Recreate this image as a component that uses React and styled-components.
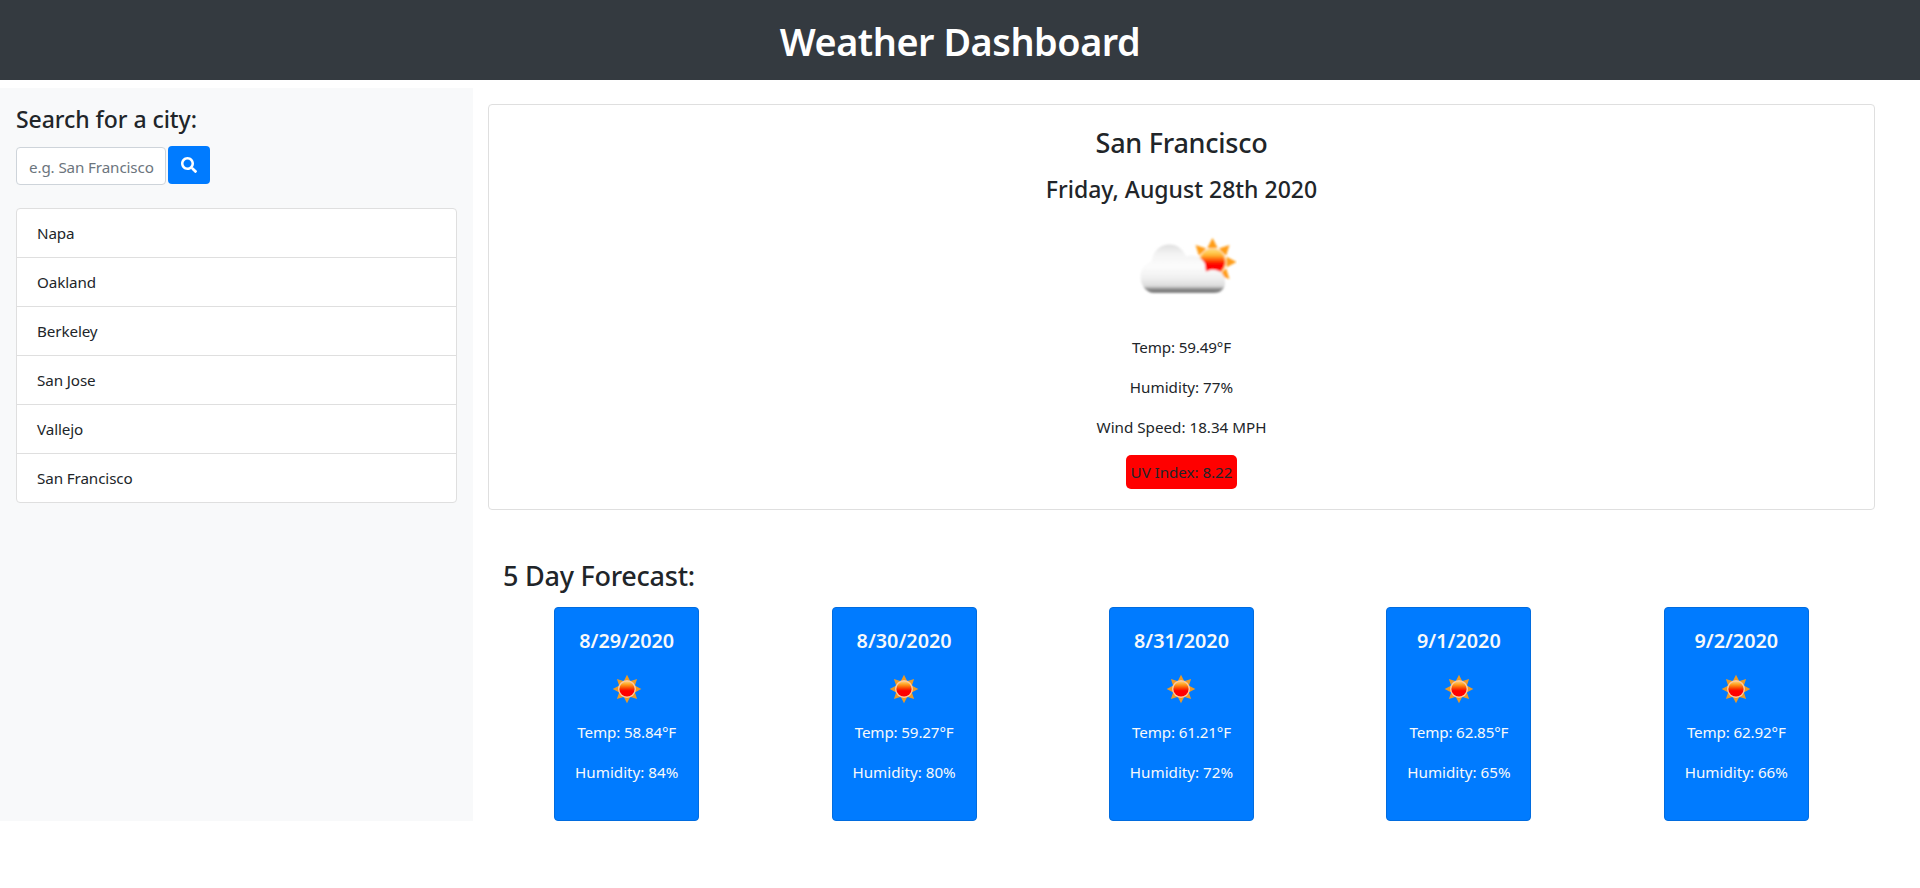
import React from 'react';
import styled, { createGlobalStyle } from 'styled-components';
import { FaSearch } from 'react-icons/fa';

const GlobalStyle = createGlobalStyle`
  *, *::before, *::after { box-sizing: border-box; }
  body {
    margin: 0;
    background: #fff;
    color: #212529;
    font: 400 15.2px/24px "Noto Sans", "Open Sans", sans-serif;
  }
  h1, h2, h3, h4, p, ul { margin: 0; padding: 0; }
`;

const Header = styled.header`
  height: 80px;
  padding-top: 18px;
  background: #343a40;
  color: #fff;
  text-align: center;
`;

const Title = styled.h1`
  font-size: 37.8px;
  font-weight: 600;
  line-height: 48px;
  letter-spacing: -0.45px;
`;

const Layout = styled.div`
  display: flex;
  height: 733px;
  margin-top: 8px;
`;

const Sidebar = styled.aside`
  width: 473px;
  padding: 17px 16px 0;
  background: #f8f9fa;
`;

const SearchTitle = styled.h3`
  font-size: 23px;
  font-weight: 500;
  line-height: 29px;
  letter-spacing: -0.05px;
`;

const SearchForm = styled.form`
  display: flex;
  gap: 2px;
  margin: 12px 0 23px;
`;

const SearchInput = styled.input`
  width: 150px;
  height: 38px;
  margin-top: 1px;
  padding: 6px 10px 4px 12px;
  border: 1px solid #ced4da;
  border-radius: 4px;
  background: #fff;
  color: #495057;
  font: inherit;
  letter-spacing: -0.12px;
  outline: none;
  &::placeholder { color: #6c757d; opacity: 1; }
`;

const SearchButton = styled.button`
  display: flex;
  align-items: center;
  justify-content: center;
  width: 42px;
  height: 38px;
  padding: 0;
  border: 0;
  border-radius: 4px;
  background: #007bff;
  color: #fff;
  font-size: 16px;
`;

const CityList = styled.ul`
  list-style: none;
  border: 1px solid #dfdfdf;
  border-radius: 4px;
  background: #fff;
`;

const City = styled.li`
  height: 49px;
  padding: 12px 20px;
  border-bottom: 1px solid #dfdfdf;
  letter-spacing: -0.1px;
  &:last-child { height: 48px; border-bottom: 0; }
`;

const Main = styled.main`
  display: flex;
  flex-direction: column;
  width: 1387px;
  margin-left: 15px;
  padding-top: 16px;
`;

const CurrentCard = styled.section`
  display: flex;
  flex-direction: column;
  align-items: center;
  height: 406px;
  padding-top: 21px;
  border: 1px solid #dfdfdf;
  border-radius: 4px;
`;

const CityName = styled.h2`
  font-size: 27px;
  font-weight: 500;
  line-height: 34px;
  letter-spacing: -0.25px;
`;

const CurrentDate = styled.h3`
  margin-top: 15px;
  font-size: 23px;
  font-weight: 500;
  line-height: 29px;
`;

const CurrentIcon = styled.svg`
  width: 110px;
  height: 90px;
  margin: 15px 0 26px;
`;

const Reading = styled.p`
  margin-bottom: 16px;
  letter-spacing: ${({ $tight }) => ($tight ? '-0.15px' : '0')};
  white-space: nowrap;
`;

const UvBadge = styled.p`
  height: 34px;
  padding: 5px;
  border-radius: 5px;
  background: #f00;
  letter-spacing: -0.05px;
`;

const ForecastTitle = styled.h2`
  margin: 49px 0 14px 15px;
  font-size: 27px;
  font-weight: 500;
  line-height: 34px;
  letter-spacing: -0.25px;
`;

const ForecastRow = styled.div`
  display: grid;
  grid-template-columns: repeat(5, 1fr);
  justify-items: center;
`;

const DayCard = styled.article`
  display: flex;
  flex-direction: column;
  align-items: center;
  width: 145px;
  height: 214px;
  padding-top: 21px;
  border: 1px solid #016cdf;
  border-radius: 4px;
  background: #007bff;
  color: #f8f9fa;
`;

const DayDate = styled.h4`
  font-size: 19.8px;
  font-weight: 600;
  line-height: 24px;
`;

const DayIcon = styled.svg`
  width: 50px;
  height: 50px;
  margin: 11px 0 6px;
`;

const cities = ['Napa', 'Oakland', 'Berkeley', 'San Jose', 'Vallejo', 'San Francisco'];

const forecast = [
  { date: '8/29/2020', temp: '58.84', humidity: 84 },
  { date: '8/30/2020', temp: '59.27', humidity: 80 },
  { date: '8/31/2020', temp: '61.21', humidity: 72 },
  { date: '9/1/2020', temp: '62.85', humidity: 65 },
  { date: '9/2/2020', temp: '62.92', humidity: 66 },
];

const RAY_ANGLES = [0, 45, 90, 135, 180, 225, 270, 315];

function Rays({ tip, base, half, fill }) {
  return RAY_ANGLES.map((angle) => (
    <path key={angle} d={`M0 ${-tip}L${half} ${-base}H${-half}Z`} fill={fill} transform={`rotate(${angle})`} />
  ));
}

function PartlyCloudy() {
  return (
    <CurrentIcon viewBox="0 0 110 90" aria-label="Partly cloudy">
      <defs>
        <linearGradient id="cloudFill" x1="0" y1="25" x2="0" y2="74" gradientUnits="userSpaceOnUse">
          <stop offset="0" stopColor="#dedede" />
          <stop offset="0.2" stopColor="#f3f3f3" />
          <stop offset="0.45" stopColor="#fcfcfc" />
          <stop offset="0.68" stopColor="#f1f1f1" />
          <stop offset="0.86" stopColor="#dcdcdc" />
          <stop offset="0.91" stopColor="#999" />
          <stop offset="0.97" stopColor="#747474" />
          <stop offset="1" stopColor="#999" />
        </linearGradient>
        <linearGradient id="warmDisc" x1="0" y1="-12" x2="0" y2="12" gradientUnits="userSpaceOnUse">
          <stop offset="0" stopColor="#ffdc73" />
          <stop offset="0.22" stopColor="#ffb52f" />
          <stop offset="0.48" stopColor="#ff3b00" />
          <stop offset="0.58" stopColor="#f00" />
        </linearGradient>
        <filter id="cloudEdge" x="-5%" y="-5%" width="110%" height="110%">
          <feGaussianBlur stdDeviation="0.8" />
        </filter>
      </defs>
      <g filter="url(#cloudEdge)">
        <g transform="translate(85.500 43)">
          <Rays tip={24} base={14} half={5.2} fill="#ff9c14" />
          <circle r="13.4" fill="#ffc870" />
          <circle r="12.3" fill="url(#warmDisc)" />
        </g>
        <path
          d="M27 74C19 74 13.500 66 13.500 57.500C13.500 50 18 44.500 24.500 43C26 32 33 25.500 42.500 25.500C50 25.500 56 30 59 37.500C62 36.500 65.500 36 68.500 37C73 38.500 76.500 41.500 78 45L79 52.500C84 50 90 50 94 53.500C97.500 57 98 60 98 64C98 69.500 94 74 87 74Z"
          fill="url(#cloudFill)"
        />
      </g>
    </CurrentIcon>
  );
}

function Sunny() {
  return (
    <DayIcon viewBox="-25 -25 50 50" aria-label="Sunny">
      <defs>
        <linearGradient id="sunDisc" x1="0" y1="-7.500" x2="0" y2="7.500" gradientUnits="userSpaceOnUse">
          <stop offset="0" stopColor="#ffcf70" />
          <stop offset="0.22" stopColor="#ff9a18" />
          <stop offset="0.48" stopColor="#f93800" />
          <stop offset="0.62" stopColor="#f00" />
        </linearGradient>
      </defs>
      <Rays tip={14.3} base={7.5} half={3.4} fill="#ee9a25" />
      <circle r="9" fill="#fbc9a0" />
      <circle r="7.600" fill="url(#sunDisc)" />
    </DayIcon>
  );
}

export default function App() {
  return (
    <>
      <GlobalStyle />
      <Header>
        <Title>Weather Dashboard</Title>
      </Header>
      <Layout>
        <Sidebar>
          <SearchTitle>Search for a city:</SearchTitle>
          <SearchForm>
            <SearchInput placeholder="e.g. San Francisco" />
            <SearchButton type="button" aria-label="Search">
              <FaSearch />
            </SearchButton>
          </SearchForm>
          <CityList>
            {cities.map((city) => (
              <City key={city}>{city}</City>
            ))}
          </CityList>
        </Sidebar>
        <Main>
          <CurrentCard>
            <CityName>San Francisco</CityName>
            <CurrentDate>Friday, August 28th 2020</CurrentDate>
            <PartlyCloudy />
            <Reading $tight>Temp: 59.49°F</Reading>
            <Reading>Humidity: 77%</Reading>
            <Reading>Wind Speed: 18.34 MPH</Reading>
            <UvBadge>UV Index: 8.22</UvBadge>
          </CurrentCard>
          <ForecastTitle>5 Day Forecast:</ForecastTitle>
          <ForecastRow>
            {forecast.map((day) => (
              <DayCard key={day.date}>
                <DayDate>{day.date}</DayDate>
                <Sunny />
                <Reading $tight>Temp: {day.temp}°F</Reading>
                <Reading>Humidity: {day.humidity}%</Reading>
              </DayCard>
            ))}
          </ForecastRow>
        </Main>
      </Layout>
    </>
  );
}
